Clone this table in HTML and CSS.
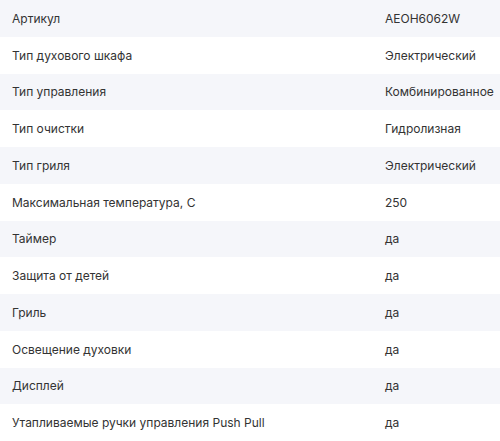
FILE: index.html
```html
<!DOCTYPE html>
<html lang="ru">
<head>
<meta charset="utf-8">
<link rel="stylesheet" href="styles.css">
</head>
<body>
<div class="specs">
  <div class="row"><div class="name">Артикул</div><div class="val">AEOH6062W</div></div>
  <div class="row"><div class="name">Тип духового шкафа</div><div class="val">Электрический</div></div>
  <div class="row"><div class="name">Тип управления</div><div class="val">Комбинированное</div></div>
  <div class="row"><div class="name">Тип очистки</div><div class="val">Гидролизная</div></div>
  <div class="row"><div class="name">Тип гриля</div><div class="val">Электрический</div></div>
  <div class="row"><div class="name">Максимальная температура, С</div><div class="val">250</div></div>
  <div class="row"><div class="name">Таймер</div><div class="val">да</div></div>
  <div class="row"><div class="name">Защита от детей</div><div class="val">да</div></div>
  <div class="row"><div class="name">Гриль</div><div class="val">да</div></div>
  <div class="row"><div class="name">Освещение духовки</div><div class="val">да</div></div>
  <div class="row"><div class="name">Дисплей</div><div class="val">да</div></div>
  <div class="row"><div class="name">Утапливаемые ручки управления Push Pull</div><div class="val">да</div></div>
</div>
</body>
</html>
```

FILE: styles.css
```css
html, body {
  margin: 0;
  padding: 0;
  background: #ffffff;
}
body {
  font-family: Inter, "Noto Sans", sans-serif;
  font-size: 12px;
  color: #333333;
}
.specs {
  display: flex;
  flex-direction: column;
  width: 500px;
}
.row {
  display: grid;
  grid-template-columns: 373px 1fr;
  align-items: center;
  height: 36.75px;
  padding-left: 12px;
  white-space: nowrap;
}
.row:nth-child(odd) {
  background: #f5f6fa;
}
```
